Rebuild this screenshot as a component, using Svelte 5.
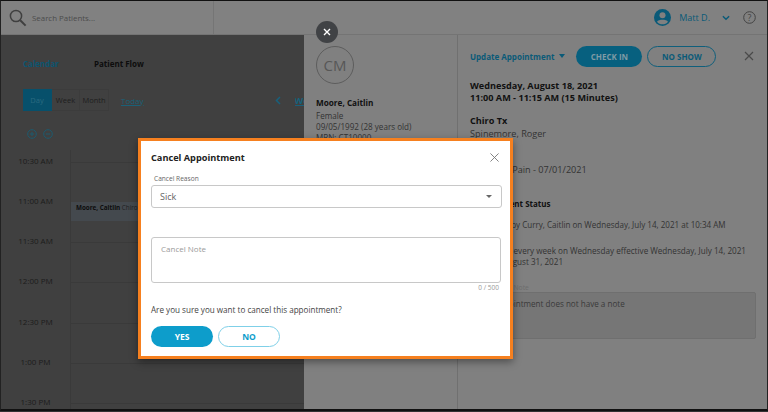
<script>
	const times = ["10:30 AM", "11:00 AM", "11:30 AM", "12:00 PM", "12:30 PM", "1:00 PM", "1:30 PM"];
</script>

<div class="screen">
	<header class="topbar">
		<div class="search">
			<svg width="18" height="18" viewBox="0 0 18 18" fill="none" stroke="#3f3f3f" stroke-width="1.5">
				<circle cx="7" cy="7" r="5.6" />
				<path d="M11.2 11.2 L16.6 16.6" stroke-width="2" />
			</svg>
			<span>Search Patients...</span>
		</div>
		<div class="user">
			<svg width="17" height="17" viewBox="0 0 18 18">
				<circle cx="9" cy="9" r="9" fill="#0a5a78" />
				<circle cx="9" cy="6.6" r="3.2" fill="#808080" />
				<path d="M3.2 13.4 C5 10.8 13 10.8 14.8 13.4 C13.4 15.4 11.2 16.2 9 16.2 C6.8 16.2 4.6 15.4 3.2 13.4 Z" fill="#808080" />
			</svg>
			<span class="user-name">Matt D.</span>
			<svg class="user-chev" width="8" height="6" viewBox="0 0 9 6" fill="none" stroke="#0a5a78" stroke-width="1.6">
				<path d="M1 1 L4.5 4.5 L8 1" />
			</svg>
			<svg width="13" height="13" viewBox="0 0 13 13" fill="none" stroke="#444">
				<circle cx="6.5" cy="6.5" r="5.8" />
				<text x="6.5" y="9.6" text-anchor="middle" class="help">?</text>
			</svg>
		</div>
	</header>

	<div class="body">
		<section class="calendar">
			<div class="tabs">
				<span class="tab-active">Calendar</span>
				<span class="tab">Patient Flow</span>
			</div>
			<div class="toolbar">
				<div class="views">
					<span class="view on">Day</span>
					<span class="view">Week</span>
					<span class="view">Month</span>
				</div>
				<span class="today">Today</span>
				<svg class="prev" width="6" height="9" viewBox="0 0 6 9" fill="none" stroke="#17607c" stroke-width="1.5">
					<path d="M5 1 L1.5 4.5 L5 8" />
				</svg>
				<span class="week">Wed</span>
			</div>
			<div class="zoomers">
				<svg width="10" height="10" viewBox="0 0 10 10" fill="none" stroke="#1d5a6e" stroke-width="1">
					<circle cx="5" cy="5" r="4.3" /><path d="M2.8 5 H7.2 M5 2.8 V7.2" />
				</svg>
				<svg width="10" height="10" viewBox="0 0 10 10" fill="none" stroke="#1d5a6e" stroke-width="1">
					<circle cx="5" cy="5" r="4.3" /><path d="M2.8 5 H7.2" />
				</svg>
			</div>
			<div class="grid">
				<div class="hours">
					{#each times as time}
						<div class="hour">{time}</div>
					{/each}
				</div>
				<div class="slots">
					{#each times as time, i}
						<div class="slot">
							{#if i === 0}
								<div class="appt"><b>Moore, Caitlin</b> Chiro Tx</div>
							{/if}
						</div>
					{/each}
				</div>
			</div>
		</section>

		<section class="patient">
			<div class="avatar">CM</div>
			<div class="patient-name">Moore, Caitlin</div>
			<div class="patient-info">Female</div>
			<div class="patient-info">09/05/1992 (28 years old)</div>
			<div class="patient-info">MRN: CT10000</div>
		</section>

		<section class="details">
			<div class="actions">
				<span class="update">Update Appointment</span>
				<span class="caret"></span>
				<span class="btn-checkin">CHECK IN</span>
				<span class="btn-noshow">NO SHOW</span>
				<svg class="details-close" width="10" height="10" viewBox="0 0 10 10" stroke="#4a4a4a" stroke-width="1.2">
					<path d="M1 1 L9 9 M9 1 L1 9" />
				</svg>
			</div>
			<div class="when">Wednesday, August 18, 2021<br />11:00 AM - 11:15 AM (15 Minutes)</div>
			<div class="strong type">Chiro Tx</div>
			<div class="line">Spinemore, Roger</div>
			<div class="line case">Low Back Pain - 07/01/2021</div>
			<div class="strong status">Appointment Status</div>
			<div class="small created">Scheduled by Curry, Caitlin on Wednesday, July 14, 2021 at 10:34 AM</div>
			<div class="small repeats">This recurs every week on Wednesday effective Wednesday, July 14, 2021<br />through August 31, 2021</div>
			<div class="note-label">Appointment Note</div>
			<div class="note">This appointment does not have a note</div>
		</section>
	</div>

	<div class="close-circle">
		<svg width="8" height="8" viewBox="0 0 8 8" stroke="#fff" stroke-width="1.4">
			<path d="M1 1 L7 7 M7 1 L1 7" />
		</svg>
	</div>

	<div class="modal">
		<div class="modal-head">
			<h2>Cancel Appointment</h2>
			<svg width="9" height="9" viewBox="0 0 10 10" stroke="#777" stroke-width="1">
				<path d="M0.5 0.5 L9.5 9.5 M9.5 0.5 L0.5 9.5" />
			</svg>
		</div>
		<div class="field-label">Cancel Reason</div>
		<div class="select">
			<span>Sick</span>
			<span class="select-caret"></span>
		</div>
		<div class="textarea">Cancel Note</div>
		<div class="counter">0 / 500</div>
		<p class="question">Are you sure you want to cancel this appointment?</p>
		<div class="modal-actions">
			<span class="yes">YES</span>
			<span class="no">NO</span>
		</div>
	</div>
</div>

<style>
	:global(body) {
		margin: 0;
		background: #333;
	}

	.screen {
		position: relative;
		box-sizing: border-box;
		width: 768px;
		height: 411px;
		display: flex;
		flex-direction: column;
		overflow: hidden;
		border-top: 1px solid #111;
		border-bottom: 2px solid #111;
		border-left: 1px solid #222;
		border-right: 1px solid #222;
		background: #808080;
		font-family: "Open Sans", sans-serif;
		color: #333;
	}

	.topbar {
		flex: none;
		height: 33px;
		display: flex;
		justify-content: space-between;
		align-items: center;
		padding: 0 11px 0 8px;
		border-bottom: 1px solid #747474;
		background: #818181;
	}

	.search {
		align-self: stretch;
		width: 204px;
		display: flex;
		align-items: center;
		gap: 5px;
		border-right: 1px solid #757575;
		font-size: 7.9px;
		color: #4c4c4c;
	}

	.user {
		display: flex;
		align-items: center;
		font-size: 9px;
		color: #0a5a78;
	}

	.user-name {
		margin: 0 12px 0 8px;
	}

	.user-chev {
		margin-right: 13px;
	}

	.help {
		font-size: 9px;
		fill: #444;
		stroke: none;
		font-family: "Open Sans", sans-serif;
	}

	.body {
		flex: 1;
		min-height: 0;
		display: flex;
	}

	.calendar {
		flex: none;
		width: 303px;
		box-sizing: border-box;
		padding: 22px 0 0 22px;
		background: #404040;
		overflow: hidden;
	}

	.tabs {
		display: flex;
		gap: 35px;
		height: 13px;
		align-items: center;
		font-size: 8px;
		font-weight: 700;
	}

	.tab-active {
		color: #0c5570;
	}

	.tab {
		color: #0d0d0d;
	}

	.toolbar {
		display: flex;
		align-items: center;
		margin-top: 19px;
		height: 22px;
		white-space: nowrap;
	}

	.toolbar > * {
		flex: none;
	}

	.views {
		display: flex;
		height: 22px;
		font-size: 7.5px;
		color: #1e1e1e;
	}

	.view {
		width: 28px;
		display: flex;
		align-items: center;
		justify-content: center;
		border: 1px solid #3c3c3c;
		border-left: 0;
		box-sizing: border-box;
	}

	.view:last-child {
		width: 29px;
	}

	.view.on {
		width: 29px;
		background: #07506b;
		border-color: #07506b;
		color: #2a6a80;
	}

	.today {
		margin-left: 12px;
		font-size: 8px;
		color: #1a6078;
		text-decoration: underline;
	}

	.prev {
		margin-left: 131px;
	}

	.toolbar .week {
		flex: 1;
		min-width: 0;
		overflow: hidden;
		margin-left: 14px;
		font-size: 9px;
		font-weight: 700;
		color: #17607c;
		text-decoration: underline;
	}

	.zoomers {
		display: flex;
		gap: 6px;
		margin: 18px 0 0 4px;
		height: 10px;
	}

	.grid {
		display: flex;
		margin: 11px 0 0 -22px;
	}

	.hours {
		width: 69px;
		flex: none;
		padding-top: 4.5px;
	}

	.hour {
		height: 40.3px;
		padding-left: 9px;
		width: 60px;
		box-sizing: border-box;
		text-align: center;
		font-size: 8px;
		color: #1c1c1c;
	}

	.slots {
		flex: 1;
		border-left: 1px solid #3a3a3a;
	}

	.slot {
		height: 40.3px;
		box-sizing: border-box;
		border-top: 1px solid #3a3a3a;
	}

	.slot:first-child {
		margin-top: 11.5px;
	}

	.appt {
		position: relative;
		margin-top: 39px;
		height: 19px;
		box-sizing: border-box;
		padding: 1.5px 0 0 5px;
		background: #44494e;
		font-size: 6.3px;
		color: #222;
		white-space: nowrap;
	}

	.appt b {
		color: #0d0d0d;
	}

	.patient {
		flex: none;
		width: 154px;
		box-sizing: border-box;
		padding: 11px 0 0 12px;
		border-right: 1px solid #707070;
		font-size: 8.1px;
		line-height: 11px;
		color: #333;
	}

	.avatar {
		width: 38px;
		height: 38px;
		box-sizing: border-box;
		display: flex;
		align-items: center;
		justify-content: center;
		border: 1px solid #5d5d5d;
		border-radius: 50%;
		font-size: 15px;
		color: #575757;
	}

	.patient-name {
		margin: 13px 0 2px;
		font-weight: 700;
		font-size: 8.2px;
		color: #111;
	}

	.details {
		flex: 1;
		min-width: 0;
		box-sizing: border-box;
		padding: 11px 11px 0 12px;
		font-size: 9.15px;
		color: #333;
		overflow: hidden;
	}

	.actions {
		display: flex;
		align-items: center;
		height: 20px;
	}

	.update {
		font-size: 8px;
		font-weight: 700;
		color: #0a5a78;
	}

	.caret {
		width: 0;
		height: 0;
		margin-left: 5px;
		border: 3px solid transparent;
		border-top: 4px solid #0a5a78;
		border-bottom: 0;
	}

	.btn-checkin,
	.btn-noshow {
		height: 21px;
		box-sizing: border-box;
		border-radius: 11px;
		display: flex;
		align-items: center;
		justify-content: center;
		font-size: 8px;
		font-weight: 700;
	}

	.btn-checkin {
		width: 66px;
		margin-left: 11px;
		background: #07607f;
		color: #7e9aa5;
	}

	.btn-noshow {
		width: 69px;
		margin-left: 5px;
		border: 1px solid #0f5f7c;
		color: #0a5a78;
	}

	.details-close {
		margin-left: auto;
		margin-right: 2px;
	}

	.when {
		margin-top: 14px;
		font-weight: 700;
		line-height: 12px;
		color: #111;
	}

	.strong {
		font-weight: 700;
		color: #111;
		line-height: 14px;
	}

	.type {
		margin-top: 10px;
	}

	.line {
		line-height: 12px;
	}

	.small {
		font-size: 8.05px;
		line-height: 11.5px;
	}

	.case {
		margin-top: 24px;
	}

	.status {
		margin-top: 21px;
		font-size: 8px;
	}

	.created {
		margin-top: 8px;
	}

	.small.repeats {
		margin-top: 14px;
		font-size: 8.15px;
	}

	.note-label {
		margin-top: 15px;
		font-size: 6.8px;
		line-height: 9px;
		color: #6d6d6d;
	}

	.note {
		width: 100%;
		height: 47px;
		box-sizing: border-box;
		padding: 5px 6px;
		background: #767676;
		border: 1px solid #6f6f6f;
		border-radius: 2px;
		font-size: 8.1px;
		color: #3a3a3a;
	}

	.close-circle {
		position: absolute;
		left: 315px;
		top: 20px;
		width: 22px;
		height: 22px;
		border-radius: 50%;
		background: #404245;
		display: flex;
		align-items: center;
		justify-content: center;
	}

	.modal {
		position: absolute;
		left: 137px;
		top: 137px;
		width: 375px;
		height: 221px;
		box-sizing: border-box;
		padding: 0 8px 0 10px;
		background: #fff;
		border: 3px solid #f6801f;
		box-shadow: 0 3px 8px rgba(0, 0, 0, 0.4);
	}

	.modal-head {
		display: flex;
		justify-content: space-between;
		align-items: center;
		height: 32px;
		padding-right: 2px;
		margin-right: 1px;
	}

	.modal-head h2 {
		margin: 0;
		font-size: 9.2px;
		font-weight: 700;
		color: #222;
	}

	.field-label {
		padding-left: 3px;
		margin-top: 1px;
		font-size: 6.6px;
		line-height: 10px;
		color: #666;
	}

	.select {
		height: 23px;
		margin-top: 1px;
		box-sizing: border-box;
		display: flex;
		align-items: center;
		justify-content: space-between;
		padding: 0 9px 0 8px;
		border: 1px solid #c8c8c8;
		border-radius: 3px;
		font-size: 9px;
		color: #666;
	}

	.select-caret {
		width: 0;
		height: 0;
		border: 3px solid transparent;
		border-top: 3px solid #666;
		border-bottom: 0;
	}

	.textarea {
		height: 46px;
		width: 350px;
		margin-top: 29px;
		box-sizing: border-box;
		padding: 5px 9px;
		border: 1px solid #c8c8c8;
		border-radius: 3px;
		font-size: 8px;
		color: #9a9a9a;
	}

	.counter {
		width: 348px;
		text-align: right;
		font-size: 6.5px;
		line-height: 9px;
		color: #999;
	}

	.question {
		margin: 12px 0 0;
		font-size: 8.1px;
		line-height: 12px;
		color: #444;
	}

	.modal-actions {
		display: flex;
		gap: 5px;
		margin-top: 10px;
	}

	.yes,
	.no {
		width: 62px;
		height: 21px;
		box-sizing: border-box;
		border-radius: 11px;
		display: flex;
		align-items: center;
		justify-content: center;
		font-size: 8.5px;
		font-weight: 700;
	}

	.yes {
		background: #0d9dcb;
		color: #fff;
	}

	.no {
		border: 1px solid #7fd0e8;
		color: #0d9dcb;
	}
</style>
